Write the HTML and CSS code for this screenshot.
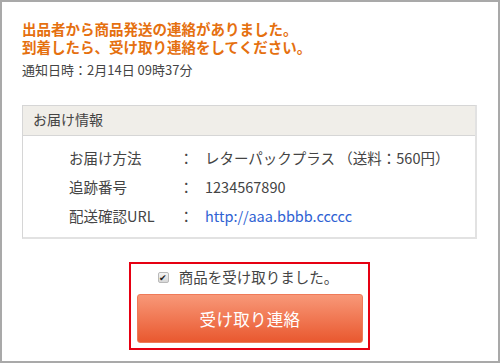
FILE: index.html
```html
<!DOCTYPE html>
<html lang="ja">
<head>
<meta charset="utf-8">
<link rel="stylesheet" href="styles.css">
</head>
<body>
<div class="frame">
  <p class="notice">出品者から商品発送の連絡がありました。<br>到着したら、受け取り連絡をしてください。</p>
  <p class="date">通知日時：2月14日 09時37分</p>
  <section class="info">
    <div class="info-head">お届け情報</div>
    <dl class="info-body">
      <dt>お届け方法</dt><dd class="colon">：</dd><dd>レターパックプラス （送料：560円）</dd>
      <dt>追跡番号</dt><dd class="colon">：</dd><dd>1234567890</dd>
      <dt>配送確認URL</dt><dd class="colon">：</dd><dd><a href="#">http://aaa.bbbb.ccccc</a></dd>
    </dl>
  </section>
  <div class="confirm">
    <label class="check"><span class="box">&#10004;</span>商品を受け取りました。</label>
    <button class="btn">受け取り連絡</button>
  </div>
</div>
</body>
</html>
```

FILE: styles.css
```css
* { box-sizing: border-box; }
html, body { margin: 0; padding: 0; background: #fff; }
body { font-family: "Noto Sans CJK JP", "Noto Sans", sans-serif; color: #444; }
.frame {
  width: 500px;
  height: 363px;
  border: 2px solid #a9a9a9;
  padding: 18px 21px 0 20px;
}
.notice {
  margin: 0;
  color: #e5700f;
  font-weight: bold;
  font-size: 14.5px;
  line-height: 18px;
}
.date {
  margin: 5px 0 0 0;
  font-size: 13px;
  line-height: 17px;
  color: #444;
}
.info {
  margin-top: 27px;
  border: 1px solid #d6d6d6;
  border-right-width: 2px;
  border-bottom-width: 2px;
  border-right-color: #e2e2e2;
  border-bottom-color: #e2e2e2;
}
.info-head {
  height: 30px;
  background: #f0eee9;
  border-bottom: 1px solid #d6d6d6;
  padding: 0 10px;
  font-size: 14px;
  line-height: 27px;
}
.info-body {
  margin: 0;
  padding: 11px 0 10px 46px;
  display: grid;
  grid-template-columns: 110px 26px 1fr;
  row-gap: 7px;
  font-size: 14.5px;
  line-height: 22px;
}
.info-body dt, .info-body dd { margin: 0; }
.info-body a { color: #2f62d3; text-decoration: none; }
.confirm {
  width: 241px;
  margin: 23px auto 0;
  border: 2px solid #e60012;
  padding: 3px 5px 5px 6px;
  display: flex;
  flex-direction: column;
  align-items: stretch;
}
.check {
  display: flex;
  align-items: center;
  justify-content: center;
  gap: 10px;
  font-size: 14.5px;
  line-height: 20px;
  color: #444;
  padding-right: 4px;
}
.box {
  width: 11px;
  height: 11px;
  border: 1px solid #b9b9b9;
  border-radius: 2px;
  background: linear-gradient(#f4f4f4, #d8d8d8);
  color: #222;
  font-size: 9px;
  line-height: 9px;
  text-align: center;
}
.btn {
  margin-top: 7px;
  height: 49px;
  border: 1px solid #ef7a58;
  border-radius: 3px;
  background: linear-gradient(#f89878, #e9582f);
  color: #fff;
  font-family: inherit;
  font-size: 16.5px;
  letter-spacing: 0.3px;
}
```
